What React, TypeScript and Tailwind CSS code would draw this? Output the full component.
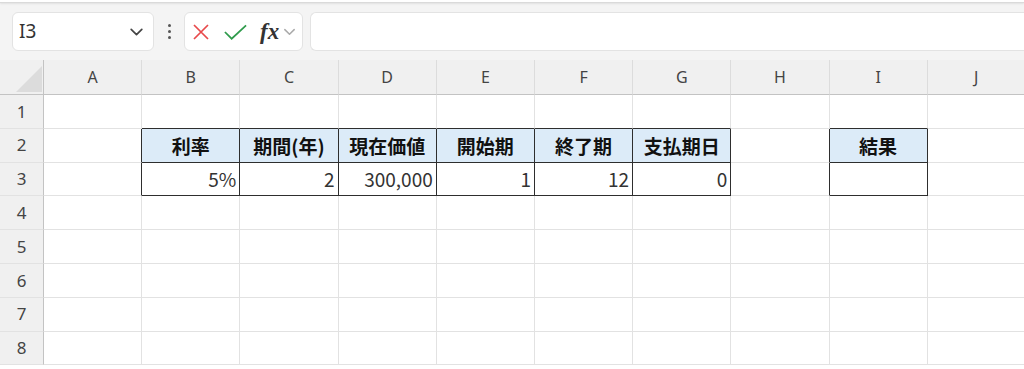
import clsx from "clsx";

const COLS = ["A", "B", "C", "D", "E", "F", "G", "H", "I", "J"];
const ROWS = [1, 2, 3, 4, 5, 6, 7, 8];

// cell content keyed by "C:row"
const CELLS: Record<string, { text: string; head?: boolean }> = {
  "B:2": { text: "利率", head: true },
  "C:2": { text: "期間(年)", head: true },
  "D:2": { text: "現在価値", head: true },
  "E:2": { text: "開始期", head: true },
  "F:2": { text: "終了期", head: true },
  "G:2": { text: "支払期日", head: true },
  "I:2": { text: "結果", head: true },
  "B:3": { text: "5%" },
  "C:3": { text: "2" },
  "D:3": { text: "300,000" },
  "E:3": { text: "1" },
  "F:3": { text: "12" },
  "G:3": { text: "0" },
  "I:3": { text: "" },
};

function inTable(c: number, r: number) {
  if (r < 2 || r > 3) return false;
  return (c >= 1 && c <= 6) || c === 8;
}

function Chevron({ className }: { className?: string }) {
  return (
    <svg viewBox="0 0 16 16" className={className} fill="none" stroke="currentColor" strokeWidth="1.6">
      <path d="M3 6l5 5 5-5" strokeLinecap="round" strokeLinejoin="round" />
    </svg>
  );
}

function Toolbar() {
  return (
    <div className="flex items-start h-[57px] pt-[9px]">
      <div className="ml-[12px] w-[142px] h-[39px] bg-white border border-[#e3e3e3] rounded-[6px] flex items-center pl-[6px] pr-[8px]">
        <span className="text-[19px] text-[#333] leading-none" style={{ fontFamily: "'Noto Sans', sans-serif" }}>
          I3
        </span>
        <Chevron className="ml-auto w-[17px] h-[17px] text-[#444]" />
      </div>
      <div className="w-[30px] h-[39px] flex flex-col items-center justify-center gap-[3px]">
        <span className="w-[3px] h-[3px] rounded-full bg-[#555]" />
        <span className="w-[3px] h-[3px] rounded-full bg-[#555]" />
        <span className="w-[3px] h-[3px] rounded-full bg-[#555]" />
      </div>
      <div className="w-[119px] h-[39px] bg-white border border-[#e3e3e3] rounded-[6px] flex items-center pl-[7px]">
        <svg viewBox="0 0 18 18" className="w-[18px] h-[18px]" fill="none" stroke="#e8494b" strokeWidth="1.7">
          <path d="M2 2l14 14M16 2L2 16" />
        </svg>
        <svg viewBox="0 0 26 18" className="ml-[13px] w-[25px] h-[18px]" fill="none" stroke="#2f9b4c" strokeWidth="1.8">
          <path d="M2 9l7 7L24 2" />
        </svg>
        <span
          className="ml-[12px] text-[23px] italic font-semibold text-[#333] leading-none"
          style={{ fontFamily: "'Liberation Serif', serif" }}
        >
          fx
        </span>
        <Chevron className="ml-[3px] w-[15px] h-[15px] text-[#aaa]" />
      </div>
      <div className="ml-[7px] flex-1 h-[39px] bg-white border border-[#e3e3e3] rounded-l-[6px] border-r-0" />
    </div>
  );
}

function Grid() {
  return (
    <div
      className="grid grid-cols-[44px_repeat(10,98.2px)] grid-rows-[35px_repeat(8,33.8px)] bg-white"
      style={{ fontFamily: "'Noto Sans CJK JP', 'Noto Sans', sans-serif" }}
    >
      {/* select-all corner */}
      <div className="bg-[#f0f0f0] border-r border-b border-[#c3c3c3] relative">
        <svg className="absolute left-[16px] top-[6px]" width="26" height="26" viewBox="0 0 26 26">
          <path d="M26 0V26H0Z" fill="#dcdcdc" />
        </svg>
      </div>
      {COLS.map((c) => (
        <div
          key={c}
          className="bg-[#f0f0f0] border-r border-r-[#dcdcdc] border-b border-b-[#c3c3c3] flex items-center justify-center text-[16px] text-[#444]"
          style={{ fontFamily: "'Noto Sans', sans-serif" }}
        >
          {c}
        </div>
      ))}
      {ROWS.map((r) => (
        <RowCells key={r} r={r} />
      ))}
    </div>
  );
}

function RowCells({ r }: { r: number }) {
  return (
    <>
      <div
        className="bg-[#f0f0f0] border-r border-r-[#c3c3c3] border-b border-b-[#e2e2e2] flex items-center justify-center text-[17px] text-[#444]"
        style={{ fontFamily: "'Noto Sans', sans-serif" }}
      >
        {r}
      </div>
      {COLS.map((c, ci) => {
        const cell = CELLS[`${c}:${r}`];
        const darkRight = inTable(ci, r) || inTable(ci + 1, r);
        const darkBottom = inTable(ci, r) || inTable(ci, r + 1);
        return (
          <div
            key={c}
            className={clsx(
              "border-r border-b flex items-center text-[19px] leading-none",
              darkRight ? "border-r-[#2e2e2e]" : "border-r-[#e2e2e2]",
              darkBottom ? "border-b-[#2e2e2e]" : "border-b-[#e2e2e2]",
              cell?.head && "bg-[#dcebf8] justify-center font-bold text-[#111]",
              cell && !cell.head && "justify-end pr-[3px] text-[#333]"
            )}
          >
            {cell?.text}
          </div>
        );
      })}
    </>
  );
}

export default function App() {
  return (
    <div className="w-[1024px] h-[369px] overflow-hidden bg-[#f4f4f4]">
      <div className="h-[3px] bg-white border-b border-[#dadada] shadow-[0_1px_2px_rgba(0,0,0,0.08)]" />
      <Toolbar />
      <div className="bg-white h-full">
        <Grid />
      </div>
    </div>
  );
}
